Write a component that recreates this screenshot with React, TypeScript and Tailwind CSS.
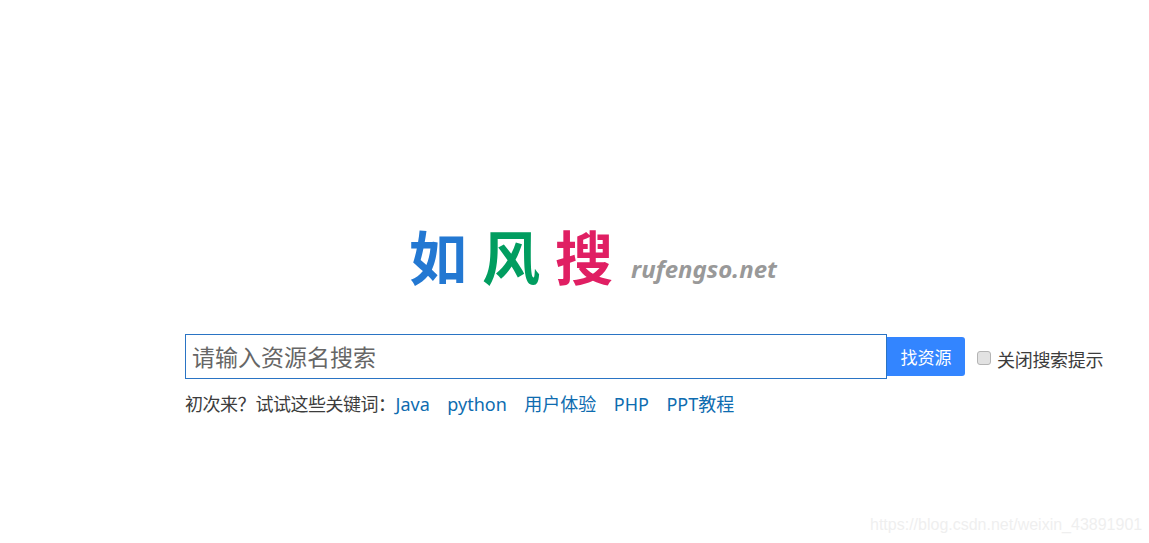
const FONT = "font-['Noto_Sans','Noto_Sans_CJK_SC',sans-serif]";

const keywords = ["Java", "python", "用户体验", "PHP", "PPT教程"];

export default function App() {
  return (
    <div className={`relative h-[543px] w-[1149px] overflow-hidden bg-white ${FONT}`}>
      <div className="pt-[220px]">
        {/* logo */}
        <div className="ml-[409px] flex h-[76px] items-center">
          <span className="text-[58px] leading-none font-bold text-[#2378d2]">如</span>
          <span className="ml-[15px] text-[58px] leading-none font-bold text-[#019d60]">风</span>
          <span className="ml-[15px] text-[58px] leading-none font-bold text-[#e01f63]">搜</span>
          <span className="mt-[22px] ml-[18px] text-[24px] leading-none font-bold text-[#999999] italic">rufengso.net</span>
        </div>

        {/* search row */}
        <div className="mt-[38px] ml-[185px] flex items-center">
          <div className="flex h-[45px] w-[702px] items-center border border-[#2a74c4] pt-[2px] pl-[6px] text-[23px] text-[#666666]">
            请输入资源名搜索
          </div>
          <button className="h-[39px] w-[78px] rounded-r-[3px] bg-[#3385ff] pt-[2px] text-[17px] text-white">找资源</button>
          <label className="ml-[12px] flex items-center pt-[8px] text-[18px] tracking-[-0.3px] text-[#3c3c3c]">
            <input
              type="checkbox"
              className="mr-[6px] mb-[6px] size-[14px] appearance-none rounded-[3px] border border-[#b4b4b4] bg-[#e2e2e2]"
            />
            关闭搜索提示
          </label>
        </div>

        {/* suggested keywords */}
        <div className="mt-[12px] ml-[185px] flex h-[27px] items-center text-[18px] text-[#3c3c3c]">
          <span className="mr-[0.5px] tracking-[-0.5px] whitespace-nowrap">初次来{"\uFF1F"}</span>
          <span className="tracking-[-0.5px] whitespace-nowrap">试试这些关键词{"\uFF1A"}</span>
          <div className="flex gap-[17.5px] text-[#0e6cb0]">
            {keywords.map((word) => (
              <a key={word}>{word}</a>
            ))}
          </div>
        </div>
      </div>

      {/* blog watermark */}
      <div className="absolute top-[513px] left-[870px] font-['Liberation_Sans',sans-serif] text-[16px] text-[#efefef]">
        https://blog.csdn.net/weixin_43891901
      </div>
    </div>
  );
}
